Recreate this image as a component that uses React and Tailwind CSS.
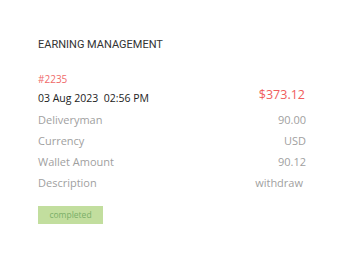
import React from "react";

const rows = [
  { label: "Deliveryman", value: "90.00" },
  { label: "Currency", value: "USD" },
  { label: "Wallet Amount", value: "90.12" },
  { label: "Description", value: "withdraw", inset: true },
];

export default function App() {
  return (
    <div className="w-[350px] h-[263px] bg-white pl-[38px] pr-[44px] pt-[37px] font-['Open_Sans',sans-serif]">
      <h1 className="text-[11px] leading-[16px] text-[#333] font-['Roboto',sans-serif]">
        EARNING MANAGEMENT
      </h1>

      <div className="mt-[19px] text-[10px] leading-[14px] text-[#f06a6a]">#2235</div>

      <div className="mt-[4px] flex items-start justify-between">
        <span className="text-[10.5px] leading-[16px] font-medium text-[#222]">03 Aug 2023&nbsp; 02:56 PM</span>
        <span className="-mt-[4px] mr-[1px] text-[12.5px] leading-[18px] font-medium text-[#f05c5c]">$373.12</span>
      </div>

      <div className="mt-[4px] flex flex-col">
        {rows.map((r) => (
          <div key={r.label} className="flex justify-between h-[21px] items-center text-[11px] text-[#9f9f9f]">
            <span>{r.label}</span>
            <span className={r.inset ? "pr-[3px]" : ""}>{r.value}</span>
          </div>
        ))}
      </div>

      <div className="mt-[12px] w-[65px] h-[18px] bg-[#c2de9e] flex items-center justify-center text-[8.5px] text-[#7aae68]">
        completed
      </div>
    </div>
  );
}
